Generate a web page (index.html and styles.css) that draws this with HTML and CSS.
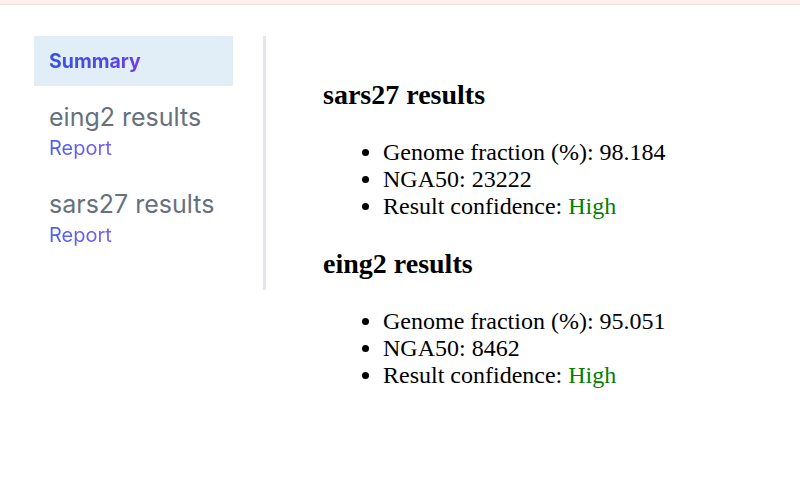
FILE: index.html
```html
<!DOCTYPE html>
<html>
<head>
<meta charset="utf-8">
<link rel="stylesheet" href="styles.css">
</head>
<body>
<div class="topbar"></div>
<div class="layout">
  <nav class="sidebar">
    <a class="nav-summary"><span class="grad">Summary</span></a>
    <div class="nav-group">
      <div class="nav-title">eing2 results</div>
      <a class="nav-link"><span class="grad-light">Report</span></a>
    </div>
    <div class="nav-group">
      <div class="nav-title">sars27 results</div>
      <a class="nav-link"><span class="grad-light">Report</span></a>
    </div>
  </nav>
  <main class="content">
    <h3>sars27 results</h3>
    <ul>
      <li>Genome fraction (%): 98.184</li>
      <li>NGA50: 23222</li>
      <li>Result confidence: <span class="high">High</span></li>
    </ul>
    <h3>eing2 results</h3>
    <ul>
      <li>Genome fraction (%): 95.051</li>
      <li>NGA50: 8462</li>
      <li>Result confidence: <span class="high">High</span></li>
    </ul>
  </main>
</div>
</body>
</html>
```

FILE: styles.css
```css
html, body {
  margin: 0;
  padding: 0;
  background: #ffffff;
}
.topbar {
  height: 4px;
  background: #fdf0ee;
  border-bottom: 1px solid #f7e0dc;
}
.layout {
  display: flex;
  align-items: flex-start;
  padding: 31px 34px 0 34px;
}
.sidebar {
  width: 199px;
  padding-right: 30px;
  padding-bottom: 30px;
  border-right: 3px solid #e2e5ea;
  font-family: Inter, "Noto Sans", sans-serif;
}
.nav-summary {
  display: flex;
  align-items: center;
  height: 50px;
  padding: 0 15px;
  background: #e1edf7;
  font-size: 19.5px;
  font-weight: 700;
}
.grad {
  background: linear-gradient(90deg, #3155e0, #6a3de8);
  -webkit-background-clip: text;
  background-clip: text;
  color: transparent;
}
.grad-light {
  background: linear-gradient(90deg, #4a63ef, #7a5cf2);
  -webkit-background-clip: text;
  background-clip: text;
  color: transparent;
}
.nav-group {
  padding: 16px 15px 9px 15px;
}
.nav-title {
  font-size: 25px;
  line-height: 30px;
  color: #66707e;
}
.nav-link {
  display: block;
  font-size: 20px;
  line-height: 32px;
}
.content {
  padding-left: 57px;
  padding-top: 15px;
  font-family: "Liberation Serif", "Times New Roman", serif;
  font-size: 24px;
  color: #000;
}
.content h3 {
  font-size: 28px;
  font-weight: 700;
  margin: 28px 0;
}
.content ul {
  margin: 24px 0;
  padding-left: 60px;
}
.high {
  color: #008000;
}
```
